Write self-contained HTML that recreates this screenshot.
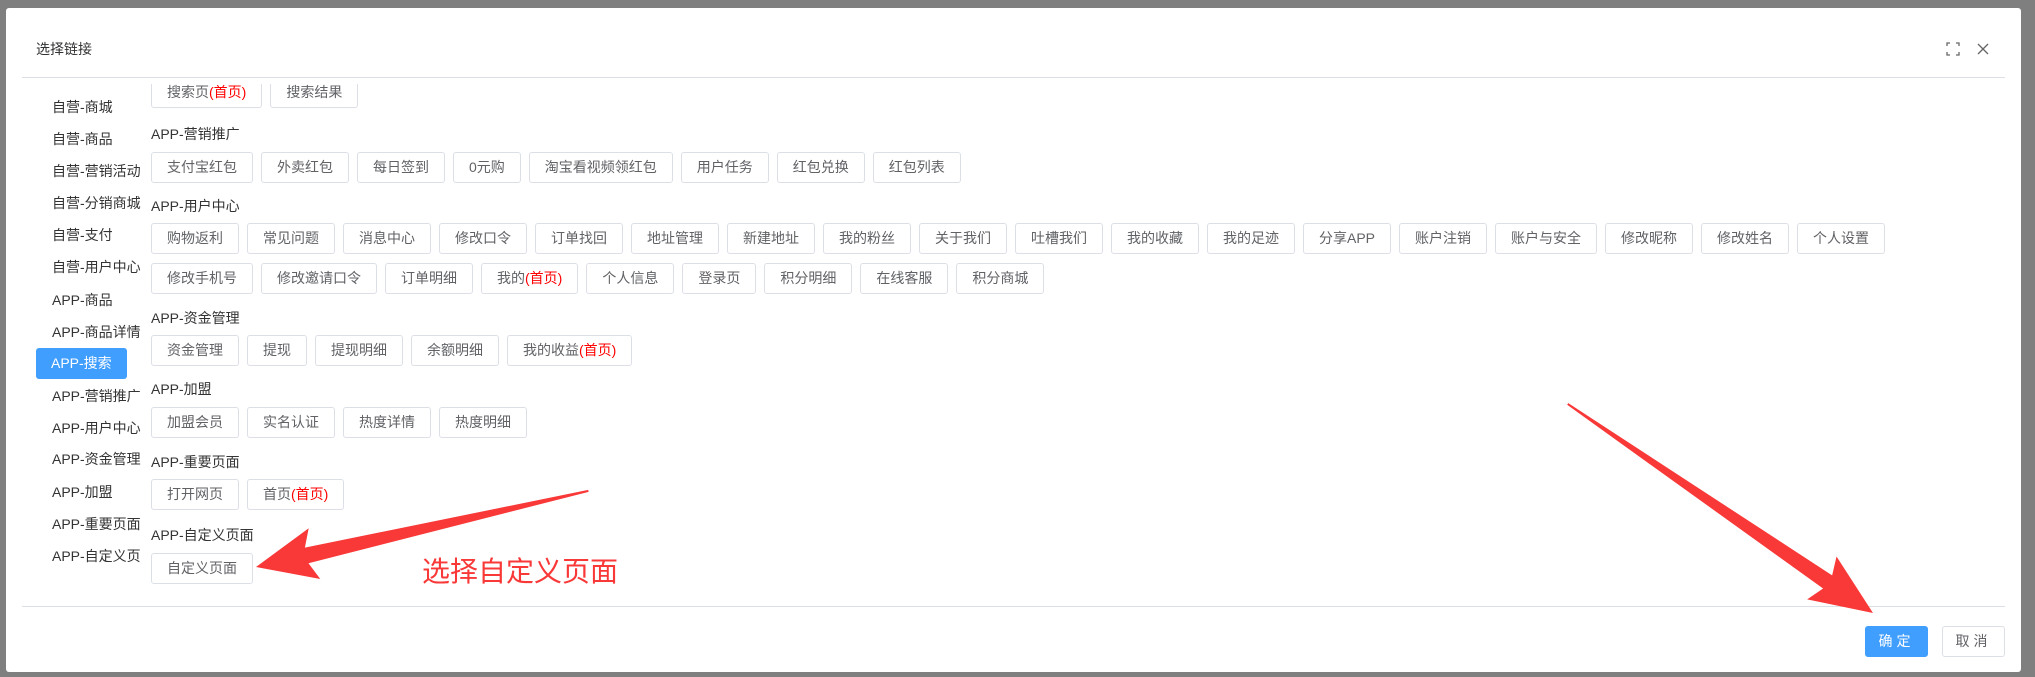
<!DOCTYPE html>
<html><head><meta charset="utf-8"><style>
*{margin:0;padding:0;box-sizing:border-box}
body{width:2035px;height:677px;background:#7f7f7f;position:relative;overflow:hidden;font-family:"Liberation Sans","Noto Sans CJK SC",sans-serif}
.modal{position:absolute;left:6px;top:8px;width:2015px;height:664px;background:#fff;border-radius:3px}
.title{position:absolute;left:30px;top:31px;font-size:14px;color:#303133}
.hl{position:absolute;left:16px;right:16px;height:1px;background:#dcdfe6}
.menu{position:absolute;left:0;top:70px;width:135px;height:530px;overflow:hidden}
.mi{position:absolute;left:46px;height:32px;line-height:32px;font-size:14px;color:#333;white-space:nowrap}
.act{position:absolute;left:30px;top:340px;width:91px;height:31px;background:#409eff;border-radius:3px;color:#fff;font-size:14px;line-height:31px;padding-left:15px}
.content{position:absolute;left:145px;top:76px;width:1800px;height:522px;overflow:hidden}
.row{position:absolute;left:0;display:flex;gap:8px}
.b{height:31px;border:1px solid #dcdfe6;border-radius:3px;padding:0 15px;font-size:14px;line-height:29px;color:#606266;white-space:nowrap;background:#fff}
.r{color:#f00}
.st{position:absolute;left:0;font-size:14px;color:#333}
.btn{position:absolute;top:618px;height:31px;width:63px;border-radius:3px;font-size:14px;line-height:29px;text-align:center;letter-spacing:4px}
</style></head><body>
<div class="modal">
<div class="title">选择链接</div>
<svg style="position:absolute;left:1940px;top:34px" width="14" height="14" viewBox="0 0 14 14" fill="none" stroke="#666" stroke-width="1.3"><path d="M1 4V1h3M10 1h3v3M13 10v3h-3M4 13H1v-3"/></svg>
<svg style="position:absolute;left:1970px;top:34px" width="14" height="14" viewBox="0 0 14 14" stroke="#666" stroke-width="1.3"><path d="M2 2L12 12M12 2L2 12"/></svg>
<div class="hl" style="top:69px"></div>
<div class="menu">
<div class="mi" style="top:13px">自营-商城</div>
<div class="mi" style="top:45px">自营-商品</div>
<div class="mi" style="top:77px">自营-营销活动</div>
<div class="mi" style="top:109px">自营-分销商城</div>
<div class="mi" style="top:141px">自营-支付</div>
<div class="mi" style="top:173px">自营-用户中心</div>
<div class="mi" style="top:206px">APP-商品</div>
<div class="mi" style="top:238px">APP-商品详情</div>
<div class="mi" style="top:302px">APP-营销推广</div>
<div class="mi" style="top:334px">APP-用户中心</div>
<div class="mi" style="top:365px">APP-资金管理</div>
<div class="mi" style="top:398px">APP-加盟</div>
<div class="mi" style="top:430px">APP-重要页面</div>
<div class="mi" style="top:462px">APP-自定义页面</div>
</div>
<div class="act" style="top:340px">APP-搜索</div>
<div class="content">
<div class="row" style="top:-7px"><div class="b">搜索页<span class="r">(首页)</span></div><div class="b">搜索结果</div></div>
<div class="st" style="top:40px">APP-营销推广</div>
<div class="row" style="top:68px"><div class="b">支付宝红包</div><div class="b">外卖红包</div><div class="b">每日签到</div><div class="b">0元购</div><div class="b">淘宝看视频领红包</div><div class="b">用户任务</div><div class="b">红包兑换</div><div class="b">红包列表</div></div>
<div class="st" style="top:112px">APP-用户中心</div>
<div class="row" style="top:139px"><div class="b">购物返利</div><div class="b">常见问题</div><div class="b">消息中心</div><div class="b">修改口令</div><div class="b">订单找回</div><div class="b">地址管理</div><div class="b">新建地址</div><div class="b">我的粉丝</div><div class="b">关于我们</div><div class="b">吐槽我们</div><div class="b">我的收藏</div><div class="b">我的足迹</div><div class="b">分享APP</div><div class="b">账户注销</div><div class="b">账户与安全</div><div class="b">修改昵称</div><div class="b">修改姓名</div><div class="b">个人设置</div></div>
<div class="row" style="top:179px"><div class="b">修改手机号</div><div class="b">修改邀请口令</div><div class="b">订单明细</div><div class="b">我的<span class="r">(首页)</span></div><div class="b">个人信息</div><div class="b">登录页</div><div class="b">积分明细</div><div class="b">在线客服</div><div class="b">积分商城</div></div>
<div class="st" style="top:224px">APP-资金管理</div>
<div class="row" style="top:251px"><div class="b">资金管理</div><div class="b">提现</div><div class="b">提现明细</div><div class="b">余额明细</div><div class="b">我的收益<span class="r">(首页)</span></div></div>
<div class="st" style="top:295px">APP-加盟</div>
<div class="row" style="top:323px"><div class="b">加盟会员</div><div class="b">实名认证</div><div class="b">热度详情</div><div class="b">热度明细</div></div>
<div class="st" style="top:368px">APP-重要页面</div>
<div class="row" style="top:395px"><div class="b">打开网页</div><div class="b">首页<span class="r">(首页)</span></div></div>
<div class="st" style="top:441px">APP-自定义页面</div>
<div class="row" style="top:469px"><div class="b">自定义页面</div></div>
</div>
<div class="hl" style="top:598px"></div>
<div class="btn" style="left:1859px;background:#409eff;color:#fff;border:1px solid #409eff">确定</div>
<div class="btn" style="left:1936px;background:#fff;color:#606266;border:1px solid #dcdfe6">取消</div>
</div>
<div style="position:absolute;left:422px;top:550px;font-size:28px;color:#f93838;font-family:'Noto Sans CJK SC',sans-serif">选择自定义页面</div>
<svg style="position:absolute;left:0;top:0" width="2035" height="677">
<g fill="#f93838">
<g transform="translate(256,567) rotate(167.1)"><polygon points="-341,-1 -52,-8 -60,-26 0,0 -60,26 -52,8 -341,1"/></g>
<g transform="translate(1873,613) rotate(34.4)"><polygon points="-370,-1 -55,-8 -62,-26 0,0 -62,26 -55,8 -370,1"/></g>
</g></svg>
</body></html>
